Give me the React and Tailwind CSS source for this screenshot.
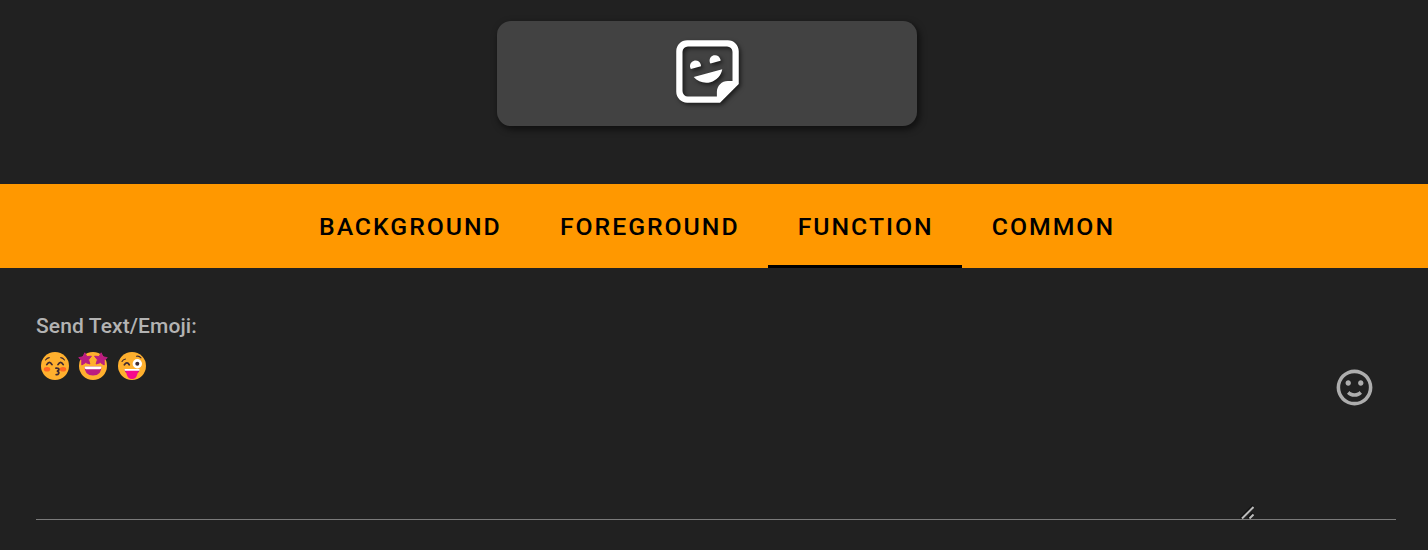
import React from 'react';

const tabs = ['BACKGROUND', 'FOREGROUND', 'FUNCTION', 'COMMON'];

function StickerIcon() {
  return (
    <svg viewBox="0 0 24 24" className="mb-[5px] size-[75px] fill-white drop-shadow-[2px_2px_2px_rgba(0,0,0,0.6)]">
      <path d="M5.5,2C3.56,2 2,3.56 2,5.5V18.5C2,20.44 3.56,22 5.5,22H16L22,16V5.5C22,3.56 20.44,2 18.5,2H5.5M5.75,4H18.25A1.75,1.75 0 0,1 20,5.75V15H18.5C16.56,15 15,16.56 15,18.5V20H5.75A1.75,1.75 0 0,1 4,18.25V5.75A1.75,1.75 0 0,1 5.75,4M14.44,6.77C14.28,6.77 14.12,6.79 13.97,6.83C13.03,7.09 12.5,8.05 12.74,9C12.79,9.15 12.86,9.3 12.95,9.44L16.18,8.56C16.18,8.39 16.16,8.22 16.12,8.05C15.91,7.3 15.22,6.77 14.44,6.77M8.17,8.5C8,8.5 7.85,8.5 7.7,8.55C6.77,8.81 6.22,9.77 6.47,10.7C6.5,10.86 6.59,11 6.68,11.16L9.91,10.28C9.91,10.11 9.89,9.94 9.85,9.78C9.64,9 8.95,8.5 8.17,8.5M16.72,11.26L7.59,13.77C8.91,15.3 11,15.94 12.95,15.41C14.9,14.87 16.36,13.25 16.72,11.26Z" />
    </svg>
  );
}

function SmileIcon() {
  return (
    <svg viewBox="0 0 24 24" className="size-[43px] fill-[#adadad]">
      <path d="M20,12A8,8 0 0,0 12,4A8,8 0 0,0 4,12A8,8 0 0,0 12,20A8,8 0 0,0 20,12M22,12A10,10 0 0,1 12,22A10,10 0 0,1 2,12A10,10 0 0,1 12,2A10,10 0 0,1 22,12M10,9.5C10,10.3 9.3,11 8.5,11C7.7,11 7,10.3 7,9.5C7,8.7 7.7,8 8.5,8C9.3,8 10,8.7 10,9.5M17,9.5C17,10.3 16.3,11 15.5,11C14.7,11 14,10.3 14,9.5C14,8.7 14.7,8 15.5,8C16.3,8 17,8.7 17,9.5M12,17.23C10.25,17.23 8.71,16.5 7.81,15.42L9.23,14C9.68,14.72 10.75,15.23 12,15.23C13.25,15.23 14.32,14.72 14.77,14L16.19,15.42C15.29,16.5 13.75,17.23 12,17.23Z" />
    </svg>
  );
}

function Kissing() {
  return (
    <svg viewBox="0 0 28 28" className="size-7" fill="none" strokeLinecap="round">
      <circle cx="14" cy="14" r="14" fill="#ffb02e" />
      <ellipse cx="6" cy="17.2" rx="3.2" ry="2.3" fill="#ff6723" />
      <ellipse cx="22" cy="17.2" rx="3.2" ry="2.3" fill="#ff6723" />
      <g stroke="#402a32" strokeWidth="1.8">
        <path d="M5.8 12.6Q8.4 8.2 11 12.6M17 12.6Q19.6 8.2 22.2 12.6" />
        <path d="M4.5 8Q6 6 8.3 5.6M19.7 5.6Q22 6 23.5 8" strokeWidth="1.1" />
        <path d="M15 16.2Q18.5 16 17.8 18Q17 19.2 15.8 19.2Q18.6 19.6 17.6 21.6Q17 22.8 15.2 22.6" />
      </g>
    </svg>
  );
}

function StarStruck() {
  return (
    <svg viewBox="0 0 28 28" className="size-7 overflow-visible">
      <circle cx="14" cy="14" r="14" fill="#ffb02e" />
      <path d="M5.6 14.5H22.4Q22.6 23.6 14 23.6Q5.4 23.6 5.6 14.5Z" fill="#bb1d80" />
      <path d="M5.7 14.5H22.3V15.8Q22.2 17.2 20.8 17.2H7.2Q5.8 17.2 5.7 15.8Z" fill="#fff" />
      <g fill="#bb1d80" stroke="#bb1d80" strokeWidth="1" strokeLinejoin="round">
        <path d="M5.8 .8L7.9 4.5L12.4 4.2L9.6 7.8L10.9 12L6.6 10.6L2.8 13L2.8 8.6L-.2 5.6L4 4.8Z" />
        <path d="M22.2 .8L20.1 4.5L15.6 4.2L18.4 7.8L17.1 12L21.4 10.6L25.2 13L25.2 8.6L28.2 5.6L24 4.8Z" />
      </g>
    </svg>
  );
}

function Zany() {
  return (
    <svg viewBox="0 0 28 28" className="size-7" fill="none" strokeLinecap="round">
      <circle cx="14" cy="14" r="14" fill="#ffb02e" />
      <circle cx="19.3" cy="11.8" r="4.7" fill="#fff" />
      <circle cx="19.3" cy="11.8" r="2" fill="#402a32" />
      <g stroke="#402a32" strokeWidth="1.8">
        <path d="M6.4 12.8Q9 9.2 11.2 12.7" />
        <path d="M4 9.4Q5 7.4 7.5 7M18.5 4.3Q21 3.5 23 5.8" strokeWidth="1.1" />
      </g>
      <path d="M6.4 17.4H21.6Q21 22.5 14 22.5Q7 22.5 6.4 17.4Z" fill="#bb1d80" />
      <path d="M8 18.4H20L19.2 22.8Q18 27 14 27Q10 27 8.8 22.8Z" fill="#f70a8d" />
      <path d="M6.5 17.1H21.5V18.7H6.8Z" fill="#fff" />
    </svg>
  );
}

export default function App() {
  return (
    <div className="flex h-[550px] w-[1428px] flex-col overflow-hidden bg-[#212121] font-['Roboto',sans-serif]">
      <header className="flex h-[184px] shrink-0 pt-[21px] pl-[497px]">
        <div className="flex h-[105px] w-[420px] items-center justify-center rounded-[14px] bg-[#424242] shadow-[2px_3px_6px_1px_rgba(0,0,0,0.5)]">
          <StickerIcon />
        </div>
      </header>

      <nav className="flex h-[84px] shrink-0 bg-[#ff9800] pl-[289px]">
        {tabs.map((tab) => (
          <button
            key={tab}
            className={`border-b-[3px] pt-[5px] pr-[28.2px] pl-[30px] text-[24.8px] font-medium tracking-[1.97px] text-black ${
              tab === 'FUNCTION' ? 'border-black' : 'border-transparent'
            }`}
          >
            {tab}
          </button>
        ))}
      </nav>

      <main className="mt-[44px] mr-8 ml-9 flex h-[208px] border-b border-[#7a7a7a]">
        <div className="flex w-[1218px] flex-col">
          <label className="h-7 text-[21px] leading-7 font-medium tracking-[0.1px] text-[#b3b3b3]">Send Text/Emoji:</label>
          <div className="mt-3 ml-[4.5px] flex gap-[10.6px]">
            <Kissing />
            <StarStruck />
            <Zany />
          </div>
          <svg viewBox="0 0 14 14" className="mt-auto ml-auto size-3.5" fill="none">
            <path d="M.5 13L13 .5M8 13L13 8" stroke="#111" strokeWidth="2" />
            <path d="M2 13.5L13.5 2M9.5 13.5L13.5 9.5" stroke="#bbb" strokeWidth="2" />
          </svg>
        </div>
        <div className="mt-[54px] ml-[79px]">
          <SmileIcon />
        </div>
      </main>
    </div>
  );
}
